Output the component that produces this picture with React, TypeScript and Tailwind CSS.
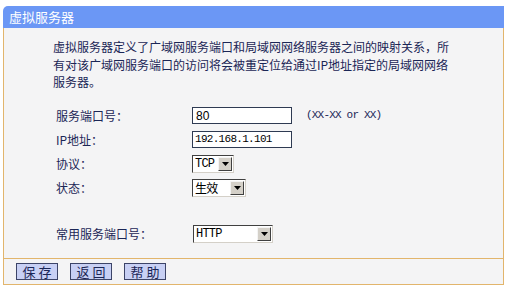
const cjk = { fontFamily: '"Noto Sans CJK SC", "Liberation Sans", sans-serif' };
const mono = { fontFamily: '"Liberation Mono", "Noto Sans CJK SC", monospace' };

function FakeSelect({ value, width, monoText }: { value: string; width: string; monoText?: boolean }) {
  return (
    <div
      className={`${width} h-[18px] flex items-center justify-between bg-white border border-t-[#404040] border-l-[#404040] border-b-[#d4d0c8] border-r-[#d4d0c8] pl-[2px] pr-[1px]`}
    >
      <span
        className="text-[12px] leading-none text-[#000] tracking-[-0.8px]"
        style={monoText ? mono : cjk}
      >
        {value}
      </span>
      <span className="w-[14px] h-[14px] flex items-center justify-center bg-[#d4d0c8] border border-t-[#f4f4f4] border-l-[#f4f4f4] border-b-[#404040] border-r-[#404040]">
        <svg width="7" height="4" viewBox="0 0 7 4">
          <path d="M0 0H7L3.5 4Z" fill="#000" />
        </svg>
      </span>
    </div>
  );
}

function Row({ label, children }: { label: React.ReactNode; children: React.ReactNode }) {
  return (
    <div className="flex items-center h-[24px]">
      <div className="w-[136px] text-[12px] text-[#1b2656]" style={cjk}>
        {label}
      </div>
      {children}
    </div>
  );
}

export default function App() {
  return (
    <div className="w-[512px] h-[290px] bg-white pt-[6px] pl-[3px]">
      <div className="w-[501px]">
        {/* Title */}
        <div
          className="h-[22px] bg-[#6b97f5] rounded-tl-[5px] text-white text-[13px] leading-[22px] pl-[6px]"
          style={cjk}
        >
          虚拟服务器
        </div>

        {/* Body */}
        <div className="h-[230px] bg-[#f4f4f5] border-x border-[#e2b56c] pl-[49px] pt-[10px]">
          <div className="text-[12px] leading-[17.5px] text-[#1b2656]" style={cjk}>
            <div>虚拟服务器定义了广域网服务端口和局域网网络服务器之间的映射关系，所</div>
            <div>有对该广域网服务端口的访问将会被重定位给通过IP地址指定的局域网网络</div>
            <div>服务器。</div>
          </div>

          <div className="mt-[13px] pl-[3px]">
            <Row label="服务端口号：">
              <div className="w-[100px] h-[17px] bg-white border border-[#2e3a52] flex items-center pl-[3px]">
                <span className="text-[12px] leading-none text-black" style={{ fontFamily: '"Liberation Sans", sans-serif' }}>
                  80
                </span>
              </div>
              <span className="ml-[14px] text-[11px] text-[#1b2656] tracking-[-0.8px]" style={mono}>
                (XX-XX or XX)
              </span>
            </Row>
            <Row label="IP地址：">
              <div className="w-[100px] h-[17px] bg-white border border-[#2e3a52] flex items-center pl-[2px]">
                <span className="text-[11px] leading-none text-black tracking-[-0.7px]" style={mono}>
                  192.168.1.101
                </span>
              </div>
            </Row>
            <Row label="协议：">
              <FakeSelect value="TCP" width="w-[42px]" monoText />
            </Row>
            <Row label="状态：">
              <FakeSelect value="生效" width="w-[54px]" />
            </Row>

            <div className="mt-[22px]">
              <Row label="常用服务端口号：">
                <div className="ml-[1px]">
                  <FakeSelect value="HTTP" width="w-[80px]" monoText />
                </div>
              </Row>
            </div>
          </div>
        </div>

        {/* Footer */}
        <div className="h-[27px] bg-[#f4f4f5] border border-[#e2b56c] flex items-center gap-[12px] pl-[12px]">
          {['保 存', '返 回', '帮 助'].map((t) => (
            <button
              key={t}
              className="w-[42px] h-[17px] bg-[#c8d0f4] border border-[#3c4468] text-[13px] leading-none text-[#1b2656] whitespace-pre"
              style={cjk}
            >
              {t}
            </button>
          ))}
        </div>
      </div>
    </div>
  );
}
